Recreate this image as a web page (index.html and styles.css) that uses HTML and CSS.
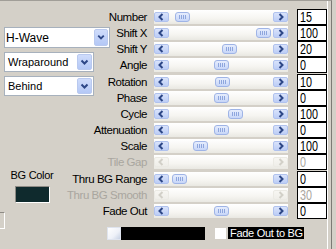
FILE: index.html
```html
<!DOCTYPE html>
<html>
<head>
<meta charset="utf-8">
<link rel="stylesheet" href="styles.css">
</head>
<body>
<div class="panel">
  <div class="left">
    <div class="combo combo-wide">
      <span class="combo-text">H-Wave</span>
      <span class="combo-btn"><svg width="13" height="17" viewBox="0 0 13 17"><polyline points="3.5,6.5 6.5,9.5 9.5,6.5" fill="none" stroke="#2d4787" stroke-width="2"/></svg></span>
    </div>
    <div class="combo">
      <span class="combo-text">Wraparound</span>
      <span class="combo-btn"><svg width="13" height="16" viewBox="0 0 13 16"><polyline points="3.5,6.5 6.5,9.5 9.5,6.5" fill="none" stroke="#2d4787" stroke-width="2"/></svg></span>
    </div>
    <div class="combo">
      <span class="combo-text">Behind</span>
      <span class="combo-btn"><svg width="13" height="16" viewBox="0 0 13 16"><polyline points="3.5,6.5 6.5,9.5 9.5,6.5" fill="none" stroke="#2d4787" stroke-width="2"/></svg></span>
    </div>
    <div class="bgcolor">
      <div class="bg-label">BG Color</div>
      <div class="swatch"></div>
    </div>
    <div class="stub"></div>
  </div>

  <div class="right">
    <div class="controls">
      <div class="label">Number</div>
      <div class="track"><span class="btn"><svg width="13" height="8" viewBox="0 0 13 8"><polyline points="7.5,1 4.5,4 7.5,7" fill="none" stroke="#2d4787" stroke-width="2"/></svg></span><span class="thumb" style="left:21px"></span><span class="btn"><svg width="13" height="8" viewBox="0 0 13 8"><polyline points="5.5,1 8.5,4 5.5,7" fill="none" stroke="#2d4787" stroke-width="2"/></svg></span></div>
      <div class="value"><span>15</span></div>

      <div class="label">Shift X</div>
      <div class="track"><span class="btn"><svg width="13" height="8" viewBox="0 0 13 8"><polyline points="7.5,1 4.5,4 7.5,7" fill="none" stroke="#2d4787" stroke-width="2"/></svg></span><span class="thumb" style="left:102px"></span><span class="btn"><svg width="13" height="8" viewBox="0 0 13 8"><polyline points="5.5,1 8.5,4 5.5,7" fill="none" stroke="#2d4787" stroke-width="2"/></svg></span></div>
      <div class="value"><span>100</span></div>

      <div class="label">Shift Y</div>
      <div class="track"><span class="btn"><svg width="13" height="8" viewBox="0 0 13 8"><polyline points="7.5,1 4.5,4 7.5,7" fill="none" stroke="#2d4787" stroke-width="2"/></svg></span><span class="thumb" style="left:68px"></span><span class="btn"><svg width="13" height="8" viewBox="0 0 13 8"><polyline points="5.5,1 8.5,4 5.5,7" fill="none" stroke="#2d4787" stroke-width="2"/></svg></span></div>
      <div class="value"><span>20</span></div>

      <div class="label">Angle</div>
      <div class="track"><span class="btn"><svg width="13" height="8" viewBox="0 0 13 8"><polyline points="7.5,1 4.5,4 7.5,7" fill="none" stroke="#2d4787" stroke-width="2"/></svg></span><span class="thumb" style="left:60px"></span><span class="btn"><svg width="13" height="8" viewBox="0 0 13 8"><polyline points="5.5,1 8.5,4 5.5,7" fill="none" stroke="#2d4787" stroke-width="2"/></svg></span></div>
      <div class="value"><span>0</span></div>

      <div class="label">Rotation</div>
      <div class="track"><span class="btn"><svg width="13" height="8" viewBox="0 0 13 8"><polyline points="7.5,1 4.5,4 7.5,7" fill="none" stroke="#2d4787" stroke-width="2"/></svg></span><span class="thumb" style="left:61px"></span><span class="btn"><svg width="13" height="8" viewBox="0 0 13 8"><polyline points="5.5,1 8.5,4 5.5,7" fill="none" stroke="#2d4787" stroke-width="2"/></svg></span></div>
      <div class="value"><span>10</span></div>

      <div class="label">Phase</div>
      <div class="track"><span class="btn"><svg width="13" height="8" viewBox="0 0 13 8"><polyline points="7.5,1 4.5,4 7.5,7" fill="none" stroke="#2d4787" stroke-width="2"/></svg></span><span class="thumb" style="left:60px"></span><span class="btn"><svg width="13" height="8" viewBox="0 0 13 8"><polyline points="5.5,1 8.5,4 5.5,7" fill="none" stroke="#2d4787" stroke-width="2"/></svg></span></div>
      <div class="value"><span>0</span></div>

      <div class="label">Cycle</div>
      <div class="track"><span class="btn"><svg width="13" height="8" viewBox="0 0 13 8"><polyline points="7.5,1 4.5,4 7.5,7" fill="none" stroke="#2d4787" stroke-width="2"/></svg></span><span class="thumb" style="left:74px"></span><span class="btn"><svg width="13" height="8" viewBox="0 0 13 8"><polyline points="5.5,1 8.5,4 5.5,7" fill="none" stroke="#2d4787" stroke-width="2"/></svg></span></div>
      <div class="value"><span>100</span></div>

      <div class="label">Attenuation</div>
      <div class="track"><span class="btn"><svg width="13" height="8" viewBox="0 0 13 8"><polyline points="7.5,1 4.5,4 7.5,7" fill="none" stroke="#2d4787" stroke-width="2"/></svg></span><span class="thumb" style="left:60px"></span><span class="btn"><svg width="13" height="8" viewBox="0 0 13 8"><polyline points="5.5,1 8.5,4 5.5,7" fill="none" stroke="#2d4787" stroke-width="2"/></svg></span></div>
      <div class="value"><span>0</span></div>

      <div class="label">Scale</div>
      <div class="track"><span class="btn"><svg width="13" height="8" viewBox="0 0 13 8"><polyline points="7.5,1 4.5,4 7.5,7" fill="none" stroke="#2d4787" stroke-width="2"/></svg></span><span class="thumb" style="left:39px"></span><span class="btn"><svg width="13" height="8" viewBox="0 0 13 8"><polyline points="5.5,1 8.5,4 5.5,7" fill="none" stroke="#2d4787" stroke-width="2"/></svg></span></div>
      <div class="value"><span>100</span></div>

      <div class="label disabled">Tile Gap</div>
      <div class="track"><span class="btn btn-off"><svg width="13" height="8" viewBox="0 0 13 8"><polyline points="7.5,1 4.5,4 7.5,7" fill="none" stroke="#d2d0c8" stroke-width="2"/></svg></span><span class="btn btn-off"><svg width="13" height="8" viewBox="0 0 13 8"><polyline points="5.5,1 8.5,4 5.5,7" fill="none" stroke="#d2d0c8" stroke-width="2"/></svg></span></div>
      <div class="value value-off"><span>0</span></div>

      <div class="label">Thru BG Range</div>
      <div class="track"><span class="btn"><svg width="13" height="8" viewBox="0 0 13 8"><polyline points="7.5,1 4.5,4 7.5,7" fill="none" stroke="#2d4787" stroke-width="2"/></svg></span><span class="thumb" style="left:18px"></span><span class="btn"><svg width="13" height="8" viewBox="0 0 13 8"><polyline points="5.5,1 8.5,4 5.5,7" fill="none" stroke="#2d4787" stroke-width="2"/></svg></span></div>
      <div class="value"><span>0</span></div>

      <div class="label disabled">Thru BG Smooth</div>
      <div class="track"><span class="btn btn-off"><svg width="13" height="8" viewBox="0 0 13 8"><polyline points="7.5,1 4.5,4 7.5,7" fill="none" stroke="#d2d0c8" stroke-width="2"/></svg></span><span class="btn btn-off"><svg width="13" height="8" viewBox="0 0 13 8"><polyline points="5.5,1 8.5,4 5.5,7" fill="none" stroke="#d2d0c8" stroke-width="2"/></svg></span></div>
      <div class="value value-off"><span>30</span></div>

      <div class="label">Fade Out</div>
      <div class="track"><span class="btn"><svg width="13" height="8" viewBox="0 0 13 8"><polyline points="7.5,1 4.5,4 7.5,7" fill="none" stroke="#2d4787" stroke-width="2"/></svg></span><span class="thumb" style="left:60px"></span><span class="btn"><svg width="13" height="8" viewBox="0 0 13 8"><polyline points="5.5,1 8.5,4 5.5,7" fill="none" stroke="#2d4787" stroke-width="2"/></svg></span></div>
      <div class="value"><span>0</span></div>
    </div>

    <div class="bottom">
      <div class="gradbar"><span class="gradthumb"></span></div>
      <span class="check"></span>
      <span class="check-label">Fade Out to BG</span>
    </div>
  </div>
</div>
</body>
</html>
```

FILE: styles.css
```css
html, body {
  margin: 0;
  padding: 0;
  background: #d4d0c8;
}

body {
  width: 336px;
  height: 249px;
  overflow: hidden;
  font-family: "Liberation Sans", Arial, sans-serif;
}

.panel {
  box-sizing: border-box;
  width: 332px;
  height: 249px;
  display: flex;
  border-top: 1px solid #a19e98;
  border-right: 1px solid #7c7a75;
  box-shadow: inset -3px 0 0 #d4d0c8, inset -4px 0 0 #ffffff;
}

/* left column */
.left {
  width: 110px;
  flex: none;
  padding: 26px 0 0 4px;
  box-sizing: border-box;
  display: flex;
  flex-direction: column;
  align-items: flex-start;
}

.combo {
  box-sizing: border-box;
  width: 90px;
  height: 20px;
  background: #fff;
  border: 1px solid #a7b1bd;
  display: flex;
  align-items: center;
  justify-content: space-between;
  padding: 0 1px 0 3px;
  margin-bottom: 4px;
  font-size: 11px;
  color: #000;
}

.combo-wide {
  width: 106px;
  height: 21px;
  font-size: 12px;
  padding-left: 1px;
}

.combo-btn {
  box-sizing: border-box;
  width: 15px;
  height: 16px;
  border-radius: 2px;
  background: linear-gradient(#cfdcfb, #b4c8f6);
  border: 1px solid #b9c9ef;
  display: flex;
  align-items: center;
  justify-content: center;
}

.combo-wide .combo-btn {
  width: 14px;
  height: 17px;
}

.bgcolor {
  margin-top: 69px;
  margin-left: 7px;
  width: 42px;
  display: flex;
  flex-direction: column;
  align-items: center;
}

.bg-label {
  font-size: 11px;
  line-height: 13px;
  letter-spacing: -0.3px;
  white-space: nowrap;
}

.swatch {
  margin-top: 4px;
  box-sizing: border-box;
  width: 35px;
  height: 17px;
  background: #0f2a2d;
  border: 1px solid;
  border-color: #8d8a84 #fff #fff #8d8a84;
}

.stub {
  margin-top: 9px;
  margin-left: -4px;
  box-sizing: border-box;
  width: 5px;
  height: 17px;
  border-top: 1px solid #8d8a84;
  border-right: 1px solid #fff;
  border-bottom: 1px solid #fff;
}

/* right column */
.right {
  flex: 1;
  display: flex;
  flex-direction: column;
}

.controls {
  padding-top: 7.7px;
  display: grid;
  grid-template-columns: 44px 143px 30px;
  grid-auto-rows: 16.2px;
  align-items: center;
}

.label {
  display: flex;
  justify-content: flex-end;
  padding-right: 7px;
  font-size: 11.5px;
  letter-spacing: -0.45px;
  white-space: nowrap;
  color: #000;
}

.label.disabled {
  color: #a9a69f;
}

.track {
  position: relative;
  box-sizing: border-box;
  width: 134px;
  height: 14px;
  background: linear-gradient(#ffffff, #f6f5f1 60%, #e9e8e2);
  display: flex;
  align-items: center;
  justify-content: space-between;
}

.btn {
  box-sizing: border-box;
  width: 15px;
  height: 10px;
  border-radius: 2px;
  background: linear-gradient(#d9e3fb, #bccdf6);
  border: 1px solid #b0c2ee;
  display: flex;
  align-items: center;
  justify-content: center;
}

.btn svg {
  display: block;
}

.btn-off {
  background: linear-gradient(#f7f6f2, #efeee9);
  border-color: #ebeae4;
}

.thumb {
  position: absolute;
  top: 2px;
  box-sizing: border-box;
  width: 15px;
  height: 10px;
  border-radius: 3px;
  background: linear-gradient(#e6edfd, #c7d6f8);
  border: 1px solid #9fb4e6;
}

.thumb::before {
  content: "";
  position: absolute;
  left: 3px;
  top: 2px;
  width: 7px;
  height: 4px;
  background: repeating-linear-gradient(to right, #8ea6dd 0 1px, transparent 1px 2px);
}

.value {
  box-sizing: border-box;
  width: 30px;
  height: 16px;
  background: #fff;
  border: 1px solid #000;
  padding-left: 2px;
  overflow: hidden;
  font-size: 15px;
  line-height: 13px;
  color: #000;
}

.value span {
  display: inline-block;
  transform: scaleX(0.72);
  transform-origin: left center;
}

.value-off {
  color: #aaa79f;
}

/* bottom row */
.bottom {
  margin-top: 8.3px;
  margin-left: -3px;
  display: flex;
  align-items: flex-start;
}

.gradbar {
  width: 98px;
  height: 13px;
  background: #000;
  display: flex;
}

.gradthumb {
  box-sizing: border-box;
  width: 14px;
  height: 13px;
  background: linear-gradient(135deg, #ffffff, #eef1f8 60%, #c7d1e4);
  border: 1px solid #dfe4ee;
}

.check {
  margin-left: 10px;
  margin-top: 1px;
  width: 11px;
  height: 11px;
  background: #fff;
}

.check-label {
  margin-left: 2px;
  width: 76px;
  height: 12px;
  background: #000;
  color: #fff;
  font-size: 11px;
  line-height: 12px;
  letter-spacing: -0.3px;
  padding-left: 2px;
  box-sizing: border-box;
  white-space: nowrap;
}
```
